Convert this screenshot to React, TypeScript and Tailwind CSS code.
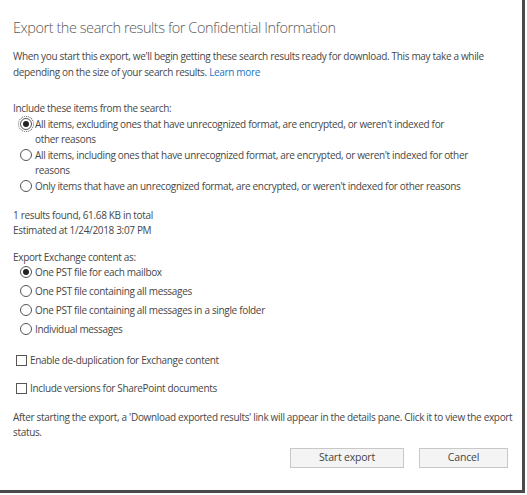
import React from "react";

function Radio({ checked, focused }: { checked?: boolean; focused?: boolean }) {
  return (
    <span
      className={`mt-[1.5px] flex h-[12px] w-[12px] shrink-0 items-center justify-center rounded-full border border-[#555] ${
        focused ? "outline outline-1 outline-dotted outline-offset-1 outline-[#555]" : ""
      }`}
    >
      {checked && <span className="h-[6px] w-[6px] rounded-full bg-[#222]" />}
    </span>
  );
}

function RadioRow({
  children,
  checked,
  focused,
}: {
  children: React.ReactNode;
  checked?: boolean;
  focused?: boolean;
}) {
  return (
    <div className="flex gap-[3px] pl-[7px]">
      <Radio checked={checked} focused={focused} />
      <span className="whitespace-nowrap leading-[15px]">{children}</span>
    </div>
  );
}

function Check({ label }: { label: string }) {
  return (
    <div className="flex items-center gap-[3px] pl-[3px] leading-[15px]">
      <span className="h-[11px] w-[11px] shrink-0 border border-[#555] bg-white" />
      <span>{label}</span>
    </div>
  );
}

export default function App() {
  return (
    <div className="h-[495px] w-[527px] bg-white" style={{ fontFamily: '"Open Sans", "Noto Sans", sans-serif' }}>
      <div className="flex h-[493px] w-[525px] flex-col border-b-[3px] border-r-[3px] border-[#4a4a4a] bg-white pl-[13px] pr-[14px] text-[10px] tracking-[-0.33px] text-[#474747]">
        <h1 className="mt-[18px] text-[14.5px] font-light leading-[20px] tracking-[-0.45px] text-[#5a5a5a]">
          Export the search results for Confidential Information
        </h1>
        <p className="mt-[9.5px] whitespace-nowrap leading-[16px]">
          When you start this export, we'll begin getting these search results ready for download. This may take a while
          <br />
          depending on the size of your search results. <span className="text-[#1a73c4]">Learn more</span>
        </p>

        <div className="mt-[21px] leading-[15px]">Include these items from the search:</div>
        <div className="mt-[1px] flex flex-col gap-[1px]">
          <RadioRow checked focused>
            All items, excluding ones that have unrecognized format, are encrypted, or weren't indexed for
            <br />
            other reasons
          </RadioRow>
          <RadioRow>
            All items, including ones that have unrecognized format, are encrypted, or weren't indexed for other
            <br />
            reasons
          </RadioRow>
          <RadioRow>Only items that have an unrecognized format, are encrypted, or weren't indexed for other reasons</RadioRow>
        </div>

        <div className="mt-[14px] leading-[15px]">
          <div>1 results found, 61.68 KB in total</div>
          <div>Estimated at 1/24/2018 3:07 PM</div>
        </div>

        <div className="mt-[12px] leading-[15px]">Export Exchange content as:</div>
        <div className="flex flex-col gap-[4px]">
          <RadioRow checked>One PST file for each mailbox</RadioRow>
          <RadioRow>One PST file containing all messages</RadioRow>
          <RadioRow>One PST file containing all messages in a single folder</RadioRow>
          <RadioRow>Individual messages</RadioRow>
        </div>

        <div className="mt-[16px] flex flex-col gap-[13px]">
          <Check label="Enable de-duplication for Exchange content" />
          <Check label="Include versions for SharePoint documents" />
        </div>

        <p className="mt-[14.5px] whitespace-nowrap leading-[15px]">
          After starting the export, a 'Download exported results' link will appear in the details pane. Click it to view the export
          <br />
          status.
        </p>

        <div className="mt-[8px] flex justify-end gap-[15px]">
          <button className="h-[20px] w-[114px] border border-[#c8c8c8] bg-[#f4f4f4] text-[10.5px] tracking-[-0.2px] text-[#444]">
            Start export
          </button>
          <button className="h-[20px] w-[89px] border border-[#c8c8c8] bg-[#f4f4f4] text-[10.5px] tracking-[-0.2px] text-[#444]">
            Cancel
          </button>
        </div>
      </div>
    </div>
  );
}
